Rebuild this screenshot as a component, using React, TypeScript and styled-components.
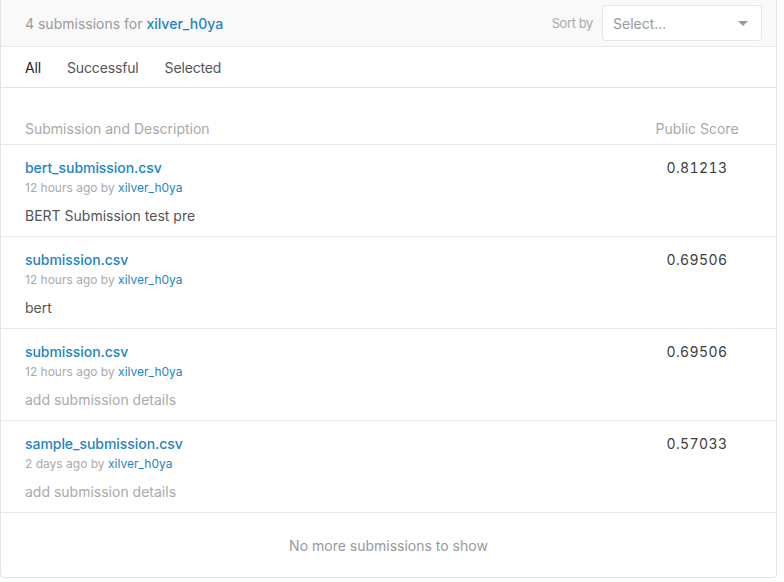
import React from 'react'
import styled, { createGlobalStyle } from 'styled-components'

const GlobalStyle = createGlobalStyle`
html, body {
margin:0;
padding:0;
background:#fff;
font-family: Inter, "Noto Sans", sans-serif;
}
`

const Card = styled.div`
width:777px;
margin-top:-4px;
box-sizing:border-box;
border:1px solid #e3e3e3;
border-radius:4px;
background:#fff;
overflow:hidden;
`

const Header = styled.div`
display:flex;
align-items:center;
justify-content:space-between;
height:50px;
padding:3px 14px 0 24px;
box-sizing:border-box;
background:#f9f9f9;
border-bottom:1px solid #e8e8e8;
`

const Title = styled.div`
font-size:14px;
color:#999;
`

const Link = styled.a<{ $bold?: boolean }>`
color:#1f84c2;
text-decoration:none;
font-weight:${p => p.$bold ? 500 : 400};
`

const SortBox = styled.div`
display:flex;
align-items:center;
gap:9px;
`

const SortLabel = styled.span`
font-size:13px;
color:#aaa;
letter-spacing:-0.4px;
`

const Select = styled.div`
width:160px;
height:36px;
box-sizing:border-box;
border:1px solid #e6e6e6;
border-radius:4px;
background:#fff;
display:flex;
align-items:center;
justify-content:space-between;
padding:0 13px 0 10px;
font-size:14px;
color:#999;
`

const Caret = styled.span`
width:0;
height:0;
border-left:5px solid transparent;
border-right:5px solid transparent;
border-top:5px solid #999;
`

const Tabs = styled.div`
display:flex;
align-items:center;
gap:26px;
height:40px;
padding:0 24px;
border-bottom:1px solid #e3e3e3;
`

const Tab = styled.span<{ $active?: boolean }>`
font-size:14px;
letter-spacing:-0.15px;
color:${p => p.$active ? '#222' : '#555'};
`

const Row = styled.div<{ $head?: boolean }>`
display:flex;
justify-content:space-between;
padding:${p => p.$head ? '31px 24px 5px 24px' : '13px 24px 10px 24px'};
border-bottom:1px solid #e8e8e8;
`

const HeadCell = styled.div`
font-size:14px;
line-height:20px;
color:#a8a8a8;
`

const ScoreCol = styled.div`
width:110px;
text-align:center;
`

const Score = styled.div`
font-size:14px;
line-height:20px;
color:#3c3c3c;
letter-spacing:0.4px;
font-variant-numeric:tabular-nums;
`

const Meta = styled.div`
font-size:12px;
line-height:20px;
color:#aaa;
`

const Desc = styled.div<{ $empty?: boolean }>`
margin-top:8px;
font-size:14px;
line-height:20px;
color:${p => p.$empty ? '#aaa' : '#555'};
`

const FileName = styled.div`
font-size:14px;
line-height:20px;
letter-spacing:-0.05px;
`

const Footer = styled.div`
height:64px;
display:flex;
align-items:center;
justify-content:center;
font-size:14px;
color:#999;
`

type Sub = { file: string; when: string; desc?: string; score: string }

const subs: Sub[] = [
  { file: 'bert_submission.csv', when: '12 hours ago', desc: 'BERT Submission test pre', score: '0.81213' },
  { file: 'submission.csv', when: '12 hours ago', desc: 'bert', score: '0.69506' },
  { file: 'submission.csv', when: '12 hours ago', score: '0.69506' },
  { file: 'sample_submission.csv', when: '2 days ago', score: '0.57033' },
]

const App: React.FC = () => {
  return (
    <>
      <GlobalStyle />
      <Card>
        <Header>
          <Title>4 submissions for <Link $bold>xilver_h0ya</Link></Title>
          <SortBox>
            <SortLabel>Sort by</SortLabel>
            <Select>Select...<Caret /></Select>
          </SortBox>
        </Header>
        <Tabs>
          <Tab $active>All</Tab>
          <Tab>Successful</Tab>
          <Tab>Selected</Tab>
        </Tabs>
        <Row $head>
          <HeadCell>Submission and Description</HeadCell>
          <ScoreCol><HeadCell>Public Score</HeadCell></ScoreCol>
        </Row>
        {subs.map((s, i) => (
          <Row key={i}>
            <div>
              <FileName><Link $bold>{s.file}</Link></FileName>
              <Meta>{s.when} by <Link>xilver_h0ya</Link></Meta>
              <Desc $empty={!s.desc}>{s.desc || 'add submission details'}</Desc>
            </div>
            <ScoreCol><Score>{s.score}</Score></ScoreCol>
          </Row>
        ))}
        <Footer>No more submissions to show</Footer>
      </Card>
    </>
  )
}

export default App
